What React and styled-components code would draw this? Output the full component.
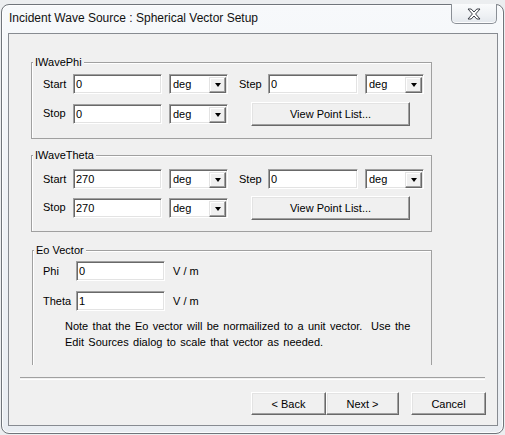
import React from 'react'
import styled, { createGlobalStyle } from 'styled-components'

const GlobalStyle = createGlobalStyle`
  html, body {
    margin:0;
    padding:0;
  }
  body {
    width:505px;
    height:435px;
    overflow:hidden;
    background:#eceef0;
    font-family:"Liberation Sans", Arial, sans-serif;
  }
`

const Window = styled.div`
  box-sizing:border-box;
  margin:4px 0 0 1px;
  width:503px;
  height:430px;
  border:1px solid #70757b;
  border-radius:8px;
  background:linear-gradient(180deg, #f7f9fb 0%, #eff2f6 45%, #e9edf2 100%);
  box-shadow:inset 0 0 0 1px rgba(255,255,255,.85);
  display:flex;
  flex-direction:column;
`

const TitleBar = styled.div`
  height:28px;
  display:flex;
  justify-content:space-between;
  align-items:flex-start;
  padding-left:7px;
`

const Title = styled.span`
  margin-top:6px;
  font-size:12px;
  line-height:15px;
  color:#111;
`

const CloseButton = styled.div`
  box-sizing:border-box;
  margin:-1px 6px 0 0;
  width:46px;
  height:20px;
  border:1px solid #8a8f96;
  border-top:none;
  border-radius:0 0 5px 5px;
  background:linear-gradient(180deg, #fafbfc 0%, #eef1f4 60%, #e3e7ec 100%);
  box-shadow:inset 0 -1px 0 rgba(255,255,255,.9);
  display:flex;
  align-items:center;
  justify-content:center;
`

const Client = styled.div`
  box-sizing:border-box;
  margin-left:6px;
  width:490px;
  height:393px;
  border:1px solid #878b91;
  background:#f0f0f0;
  padding-top:28px;
  display:flex;
  flex-direction:column;
  align-items:flex-start;
  font-size:11px;
  color:#000;
`

const Group = styled.div`
  position:relative;
  box-sizing:border-box;
  margin-top:${p => p.$mt || 0}px;
  margin-left:${p => p.$ml || 22}px;
  width:${p => p.$w || 401}px;
  height:${p => p.$h}px;
  border:1px solid #a0a0a0;
  border-bottom:${p => (p.$open ? 'none' : '1px solid #a0a0a0')};
  box-shadow:inset 1px 1px 0 #fff;
  padding:${p => p.$pt}px 0 0 ${p => p.$pl || 11}px;
  display:flex;
  flex-direction:column;
  gap:${p => p.$gap}px;
`

const GroupLabel = styled.span`
  position:absolute;
  top:-7px;
  left:1px;
  padding:0 2px 0 2px;
  background:#f0f0f0;
  line-height:13px;
`

const Row = styled.div`
  display:flex;
  align-items:center;
  height:${p => p.$h || 20}px;
`

const FieldLabel = styled.span`
  width:${p => p.$w}px;
  margin-left:${p => p.$ml || 0}px;
  margin-top:${p => p.$dy || 0}px;
  flex-shrink:0;
  white-space:nowrap;
`

const TextInput = styled.input`
  box-sizing:border-box;
  width:${p => p.$w || 89}px;
  height:20px;
  margin:0;
  padding:0 0 0 2px;
  border:1px solid;
  border-color:#a0a0a0 #fff #fff #a0a0a0;
  box-shadow:inset 1px 1px 0 #696969, inset -1px -1px 0 #e3e3e3;
  background:#fff;
  font-family:inherit;
  font-size:11px;
  color:#000;
  outline:none;
`

const Combo = styled.div`
  box-sizing:border-box;
  width:59px;
  height:20px;
  margin-left:7px;
  border:1px solid;
  border-color:#a0a0a0 #fff #fff #a0a0a0;
  box-shadow:inset 1px 1px 0 #696969, inset -1px -1px 0 #e3e3e3;
  background:#fff;
  display:flex;
  align-items:center;
  padding:0 1px 0 2px;
`

const ComboText = styled.span`
  flex:1;
  padding-left:1px;
`

const DropButton = styled.div`
  box-sizing:border-box;
  width:17px;
  height:16px;
  margin-top:1px;
  border:1px solid;
  border-color:#e3e3e3 #696969 #696969 #e3e3e3;
  box-shadow:inset -1px -1px 0 #a0a0a0, inset 1px 1px 0 #fff;
  background:#f0f0f0;
  display:flex;
  align-items:center;
  justify-content:center;

  &::after {
    content:'';
    border-left:3.5px solid transparent;
    border-right:3.5px solid transparent;
    border-top:4px solid #000;
  }
`

const Button = styled.button`
  box-sizing:border-box;
  width:${p => p.$w || 75}px;
  height:${p => p.$h || 23}px;
  margin:0 0 0 ${p => p.$ml || 0}px;
  padding:0;
  border:1px solid;
  border-color:#fff #696969 #696969 #fff;
  box-shadow:inset -1px -1px 0 #a0a0a0, inset 1px 1px 0 #e3e3e3;
  background:#f0f0f0;
  font-family:inherit;
  font-size:11px;
  color:#000;
  flex-shrink:0;
`

const Unit = styled.span`
  margin-left:8px;
`

const Note = styled.p`
  margin:-3px 0 0 22px;
  line-height:16px;
  white-space:nowrap;
  word-spacing:1.3px;
`

const Separator = styled.div`
  margin:12px 0 0 11px;
  width:465px;
  height:1px;
  border-top:1px solid #a0a0a0;
  border-bottom:1px solid #fff;
`

const ButtonBar = styled.div`
  margin-top:12px;
  align-self:stretch;
  display:flex;
  justify-content:flex-end;
  padding-right:11px;
`

const CloseGlyph = () => (
  <svg width="14" height="12" viewBox="-1 -1 14 12">
    <polygon
      points="0,0 3.2,0 6,3 8.8,0 12,0 7.6,5 12,10 8.8,10 6,7 3.2,10 0,10 4.4,5"
      fill="#fff"
      stroke="#3c4048"
      strokeWidth="1"
      strokeLinejoin="round"
    />
  </svg>
)

const Select = ({ value }) => (
  <Combo>
    <ComboText>{value}</ComboText>
    <DropButton />
  </Combo>
)

const SweepGroup = ({ title, start, stop, step, mt, pt, gap }) => (
  <Group $mt={mt} $h={77} $pt={pt} $gap={gap}>
    <GroupLabel>{title}</GroupLabel>
    <Row>
      <FieldLabel $w={30}>Start</FieldLabel>
      <TextInput defaultValue={start} />
      <Select value="deg" />
      <FieldLabel $w={29} $ml={11}>Step</FieldLabel>
      <TextInput $w={90} defaultValue={step} />
      <Select value="deg" />
    </Row>
    <Row $h={24}>
      <FieldLabel $w={30} $dy={-3}>Stop</FieldLabel>
      <TextInput defaultValue={stop} />
      <Select value="deg" />
      <Button $w={159} $h={24} $ml={23}>View Point List...</Button>
    </Row>
  </Group>
)

export default function App() {
  return (
    <>
      <GlobalStyle />
      <Window>
        <TitleBar>
          <Title>Incident Wave Source : Spherical Vector Setup</Title>
          <CloseButton>
            <CloseGlyph />
          </CloseButton>
        </TitleBar>
        <Client>
          <SweepGroup title="IWavePhi" start="0" stop="0" step="0" pt={11} gap={8} />
          <SweepGroup title="IWaveTheta" start="270" stop="270" step="0" mt={16} pt={13} gap={7} />
          <Group $mt={18} $ml={23} $w={400} $h={115} $pt={10} $pl={10} $gap={10} $open>
            <GroupLabel>Eo Vector</GroupLabel>
            <Row>
              <FieldLabel $w={33}>Phi</FieldLabel>
              <TextInput defaultValue="0" />
              <Unit>V / m</Unit>
            </Row>
            <Row>
              <FieldLabel $w={33}>Theta</FieldLabel>
              <TextInput defaultValue="1" />
              <Unit>V / m</Unit>
            </Row>
            <Note>
              Note that the Eo vector will be normailized to a unit vector.&nbsp; Use the
              <br />
              Edit Sources dialog to scale that vector as needed.
            </Note>
          </Group>
          <Separator />
          <ButtonBar>
            <Button $w={75}>&lt; Back</Button>
            <Button $w={73}>Next &gt;</Button>
            <Button $w={75} $ml={12}>Cancel</Button>
          </ButtonBar>
        </Client>
      </Window>
    </>
  )
}
